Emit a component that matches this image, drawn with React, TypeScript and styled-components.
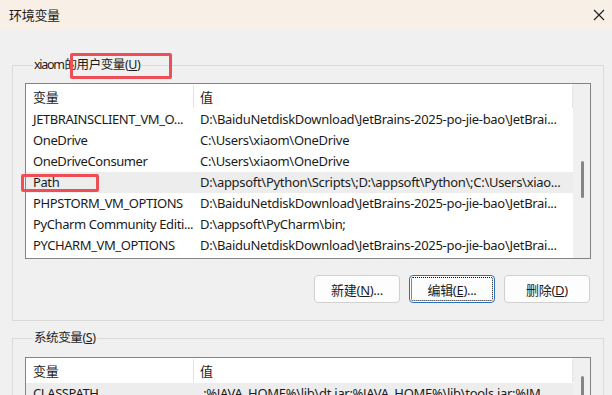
import React from 'react';
import styled, { createGlobalStyle } from 'styled-components';

const GlobalStyle = createGlobalStyle`
  html, body {
    margin: 0;
    padding: 0;
    background: #f0f0f0;
  }
  body {
    font-family: "Noto Sans", "Noto Sans CJK SC", sans-serif;
    font-size: 13px;
    letter-spacing: -0.3px;
    color: #1b1b1b;
  }
`;

const Window = styled.div`
  position: relative;
  width: 612px;
  height: 395px;
  overflow: hidden;
  background: #f0f0f0;
  display: flex;
  flex-direction: column;
`;

const TopStrip = styled.div`
  height: 2px;
  background: #b6b6b6;
`;

const TitleBar = styled.div`
  height: 30px;
  flex-shrink: 0;
  background: #f8f0e7;
  display: flex;
  align-items: center;
  justify-content: space-between;
  padding: 0 7px 0 9px;
`;

const Title = styled.span`
  font-size: 13px;
  line-height: 18px;
`;

const Content = styled.div`
  display: flex;
  flex-direction: column;
  padding: 0 8px 0 12px;
`;

const GroupBox = styled.fieldset<{ $top: number; $padTop: number }>`
  margin: ${(p) => p.$top}px 0 0 0;
  padding: ${(p) => p.$padTop}px 12px 17px 12px;
  border: 1px solid #dadada;
  min-width: 0;
`;

const Legend = styled.legend`
  margin-left: 8px;
  padding: 0 1px;
  font-size: 12.5px;
  letter-spacing: -0.4px;
  line-height: 18px;
`;

const UserName = styled.span`
  letter-spacing: -1.3px;
  margin-right: -2px;
`;

const ListBox = styled.div<{ $height: number }>`
  box-sizing: border-box;
  height: ${(p) => p.$height}px;
  border: 1px solid #838383;
  background: #fff;
  display: flex;
`;

const Table = styled.div`
  flex: 1;
  min-width: 0;
  display: flex;
  flex-direction: column;
`;

const HeaderRow = styled.div`
  height: 25px;
  display: grid;
  grid-template-columns: 168px 1fr;
  align-items: center;
`;

const HeaderCell = styled.div<{ $first?: boolean }>`
  height: 23px;
  display: flex;
  align-items: center;
  padding-left: ${(p) => (p.$first ? 7 : 6)}px;
  border-right: 1px solid #e5e5e5;
`;

const Row = styled.div<{ $selected?: boolean }>`
  height: 21px;
  display: grid;
  grid-template-columns: 168px 1fr;
  align-items: center;
  background: ${(p) => (p.$selected ? '#ededed' : 'transparent')};
`;

const Cell = styled.div<{ $first?: boolean }>`
  padding-left: ${(p) => (p.$first ? 7 : 6)}px;
  letter-spacing: ${(p) => (p.$first ? '-0.4px' : '-0.3px')};
  white-space: nowrap;
  overflow: hidden;
  line-height: 21px;
`;

const ScrollTrack = styled.div`
  width: 17px;
  flex-shrink: 0;
  background: #f0f0f0;
  display: flex;
  flex-direction: column;
`;

const Thumb = styled.div<{ $offset: number; $size: number }>`
  width: 3px;
  margin-left: 8px;
  margin-top: ${(p) => p.$offset}px;
  height: ${(p) => p.$size}px;
  border-radius: 2px;
  background: #858585;
`;

const ButtonRow = styled.div`
  display: flex;
  justify-content: flex-end;
  gap: 9px;
  margin-top: 16px;
  padding-right: 1px;
`;

const Button = styled.button<{ $focused?: boolean }>`
  box-sizing: border-box;
  width: 86px;
  height: 28px;
  border-radius: 4px;
  border: 1px solid ${(p) => (p.$focused ? '#2b6fc1' : '#d0d0d0')};
  background: #fdfdfd;
  font-family: inherit;
  font-size: 13px;
  letter-spacing: inherit;
  color: #1b1b1b;
  padding: 0;
  outline: ${(p) => (p.$focused ? '1px dotted #111' : 'none')};
  outline-offset: -3px;
`;

const Mark = styled.div<{ $x: number; $y: number; $w: number; $h: number }>`
  position: absolute;
  left: ${(p) => p.$x}px;
  top: ${(p) => p.$y}px;
  width: ${(p) => p.$w}px;
  height: ${(p) => p.$h}px;
  box-sizing: border-box;
  border: 3px solid #ee4e56;
  border-radius: 2px;
`;

const CloseIcon = () => (
  <svg width="12" height="12" viewBox="0 0 12 12">
    <path d="M1 1 L11 11 M11 1 L1 11" stroke="#1b1b1b" strokeWidth="1.1" fill="none" />
  </svg>
);

const userVars: [string, string][] = [
  ['JETBRAINSCLIENT_VM_O...', 'D:\\BaiduNetdiskDownload\\JetBrains-2025-po-jie-bao\\JetBrai...'],
  ['OneDrive', 'C:\\Users\\xiaom\\OneDrive'],
  ['OneDriveConsumer', 'C:\\Users\\xiaom\\OneDrive'],
  ['Path', 'D:\\appsoft\\Python\\Scripts\\;D:\\appsoft\\Python\\;C:\\Users\\xiao...'],
  ['PHPSTORM_VM_OPTIONS', 'D:\\BaiduNetdiskDownload\\JetBrains-2025-po-jie-bao\\JetBrai...'],
  ['PyCharm Community Editi...', 'D:\\appsoft\\PyCharm\\bin;'],
  ['PYCHARM_VM_OPTIONS', 'D:\\BaiduNetdiskDownload\\JetBrains-2025-po-jie-bao\\JetBrai...'],
];

const systemVars: [string, string][] = [
  ['CLASSPATH', '.;%JAVA_HOME%\\lib\\dt.jar;%JAVA_HOME%\\lib\\tools.jar;%JM...'],
];

const VarList = ({
  rows,
  selected,
  height,
  thumbOffset,
  thumbSize,
}: {
  rows: [string, string][];
  selected?: number;
  height: number;
  thumbOffset: number;
  thumbSize: number;
}) => (
  <ListBox $height={height}>
    <Table>
      <HeaderRow>
        <HeaderCell $first>变量</HeaderCell>
        <HeaderCell>值</HeaderCell>
      </HeaderRow>
      {rows.map(([name, value], i) => (
        <Row key={name} $selected={i === selected}>
          <Cell $first>{name}</Cell>
          <Cell>{value}</Cell>
        </Row>
      ))}
    </Table>
    <ScrollTrack>
      <Thumb $offset={thumbOffset} $size={thumbSize} />
    </ScrollTrack>
  </ListBox>
);

export default function App() {
  return (
    <Window>
      <GlobalStyle />
      <TopStrip />
      <TitleBar>
        <Title>环境变量</Title>
        <CloseIcon />
      </TitleBar>
      <Content>
        <GroupBox $top={26} $padTop={9}>
          <Legend>
            <UserName>xiaom</UserName> 的用户变量(<u>U</u>)
          </Legend>
          <VarList rows={userVars} selected={3} height={176} thumbOffset={77} thumbSize={37} />
          <ButtonRow>
            <Button>
              新建(<u>N</u>)...
            </Button>
            <Button $focused>
              编辑(<u>E</u>)...
            </Button>
            <Button>
              删除(<u>D</u>)
            </Button>
          </ButtonRow>
        </GroupBox>
        <GroupBox $top={8} $padTop={10}>
          <Legend>
            系统变量(<u>S</u>)
          </Legend>
          <VarList rows={systemVars} selected={0} height={120} thumbOffset={18} thumbSize={40} />
        </GroupBox>
      </Content>
      <Mark $x={70} $y={53} $w={102} $h={26} />
      <Mark $x={21} $y={174} $w={78} $h={18} />
    </Window>
  );
}
